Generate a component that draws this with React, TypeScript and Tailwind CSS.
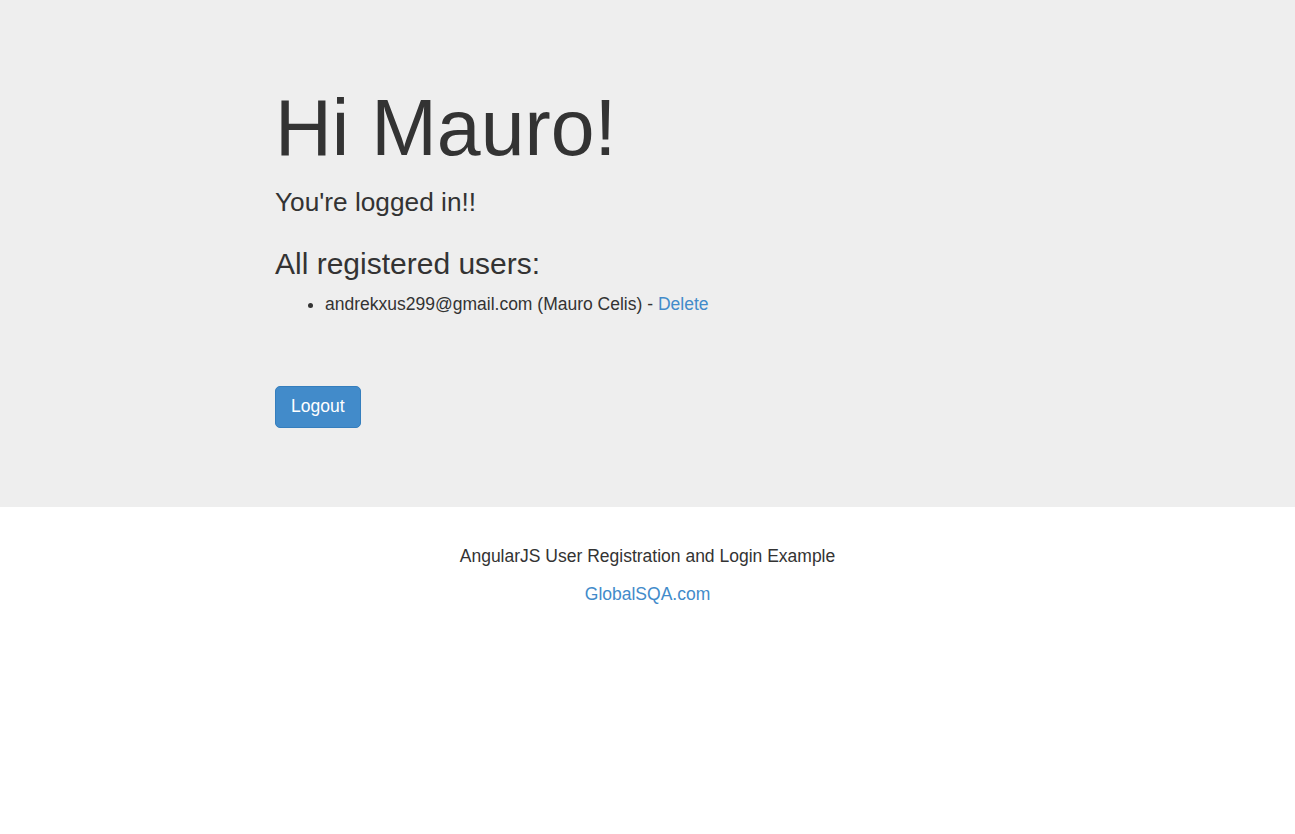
export default function App() {
  return (
    <div
      className="min-h-[834px] bg-white text-[#333] text-[17.5px] leading-[25px]"
      style={{ fontFamily: '"Liberation Sans", Arial, Helvetica, sans-serif' }}
    >
      <div className="bg-[#eee] pt-[60px] pb-[60px] mb-[37.5px]">
        <div className="pl-[275px] pr-[271px] flow-root">
          <h1 className="mt-[25px] mb-[12.5px] text-[78.75px] leading-[1.1] font-normal">Hi Mauro!</h1>
          <p className="text-[26.25px] leading-[37.5px] mb-[18.75px]">You're logged in!!</p>
          <h3 className="mt-[25px] mb-[12.5px] text-[30px] leading-[1.1] font-normal">All registered users:</h3>
          <ul className="list-disc pl-[50px] mb-[12.5px]">
            <li>
              andrekxus299@gmail.com (Mauro Celis) - <a className="text-[#428bca] cursor-pointer">Delete</a>
            </li>
          </ul>
          <p className="text-[26.25px] leading-[37.5px] mb-[18.75px]">&nbsp;</p>
          <p className="text-[26.25px] leading-[37.5px] mb-[18.75px]">
            <a className="inline-block align-middle bg-[#428bca] border border-[#357ebd] text-white text-[17.5px] leading-[25px] px-[15px] py-[7.5px] rounded-[5px]">
              Logout
            </a>
          </p>
        </div>
      </div>
      <div className="text-center">
        <p className="mb-[12.5px]">AngularJS User Registration and Login Example</p>
        <p className="mb-[12.5px]">
          <a className="text-[#428bca]">GlobalSQA.com</a>
        </p>
      </div>
    </div>
  );
}
